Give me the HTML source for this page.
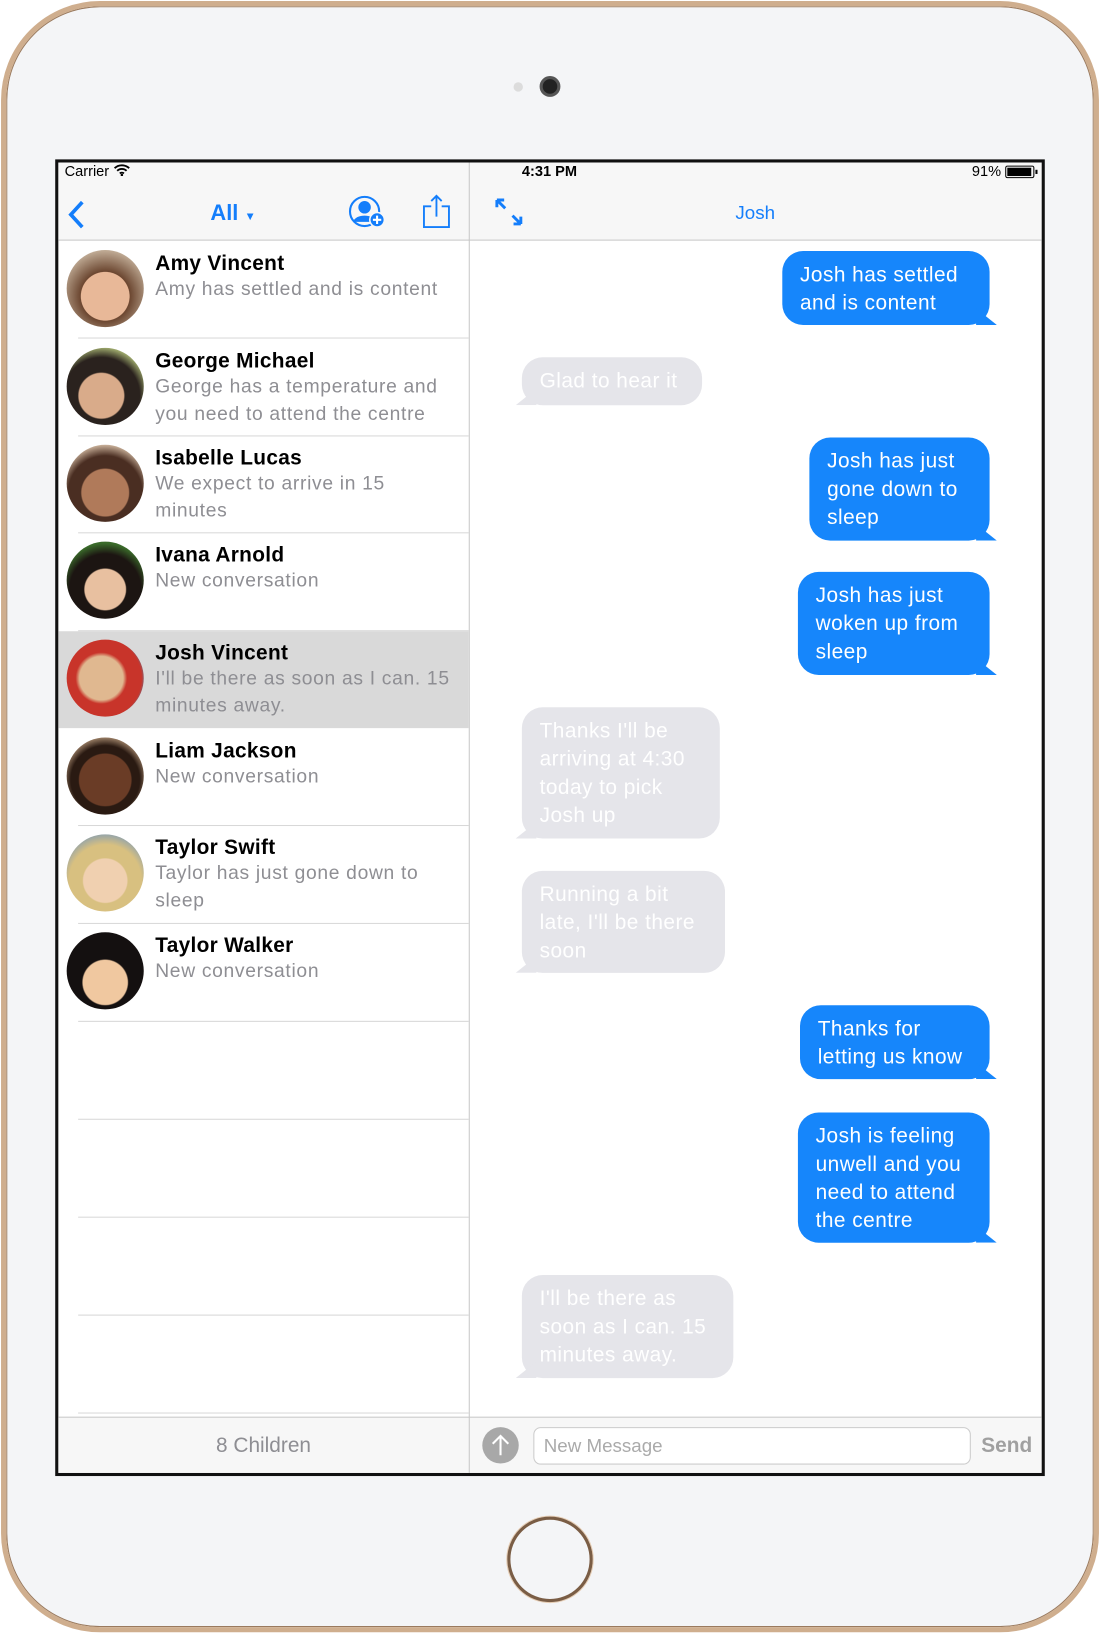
<!DOCTYPE html>
<html><head><meta charset="utf-8"><style>
*{margin:0;padding:0;box-sizing:border-box}
html,body{width:1100px;height:1633px;overflow:hidden;background:#fff}
#w{position:absolute;left:0;top:0;width:1056px;height:1568px;transform:scale(1.041667);transform-origin:0 0;font-family:"Liberation Sans",sans-serif}
.dev{position:absolute;left:1px;top:1px;width:1054px;height:1566px;border-radius:95px;border:5px solid #cfae8e;background:#f4f5f7;box-shadow:inset 0 0 0 1px #9a7a5e}
.scr{position:absolute;left:53px;top:153px;width:950px;height:1264px;border:3px solid #111;background:#fff;overflow:hidden}
.a{position:absolute}
.nav{position:absolute;left:0;top:0;width:944px;height:75px;background:#f7f7f7;border-bottom:1px solid #c8c8c8}
.st{font-size:14px;color:#000;position:absolute;top:0px}
.blue{color:#147efb}
.row{position:absolute;left:0;width:394px;height:94px}
.av{position:absolute;left:8px;top:8px;width:74px;height:74px;border-radius:50%}
.nm{position:absolute;left:93px;top:10px;font-size:20px;font-weight:bold;color:#000;white-space:nowrap;letter-spacing:0.3px}
.sb{position:absolute;left:93px;top:32px;font-size:18.5px;line-height:26px;color:#8e8e93;width:292px;letter-spacing:0.65px}
.sep{position:absolute;left:19px;width:375px;height:1px;background:#d8d8d8}
.b{position:absolute;border-radius:20px;font-size:20px;line-height:27px;color:#fff;padding:10px 17px 8px;letter-spacing:0.45px}
.bl{background:#1686fb}
.gr{background:#e5e5ea}
.bl:after{content:"";position:absolute;right:-7px;bottom:0;width:20px;height:16px;background:#1686fb;clip-path:polygon(0 0,100% 100%,0 100%)}
.gr:after{content:"";position:absolute;left:-6px;bottom:0;width:20px;height:16px;background:#e5e5ea;clip-path:polygon(100% 0,100% 100%,0 100%)}
</style></head><body><div id="w">
<div class="dev"></div>
<div class="a" style="left:493px;top:79px;width:9px;height:9px;border-radius:50%;background:#dcdcdc"></div>
<div class="a" style="left:518px;top:73px;width:20px;height:20px;border-radius:50%;background:#222;border:3px solid #555"></div>
<div class="a" style="left:487px;top:1456px;width:82px;height:82px;border-radius:50%;border:3px solid #7a5d45;box-shadow:0 0 0 1px #e6cdb4"></div>
<div class="scr">
 <div class="nav"></div>
 <div class="a" style="left:394px;top:0;width:1px;height:1264px;background:#c8c8c8"></div>
 <div class="st" style="left:6px">Carrier <svg width="16" height="12" viewBox="0 0 16 12" style="vertical-align:0"><path d="M1 4.5a10 10 0 0 1 14 0M3.5 7a6.5 6.5 0 0 1 9 0M6 9.5a3 3 0 0 1 4 0" stroke="#000" stroke-width="1.8" fill="none"/><circle cx="8" cy="11" r="1.2"/></svg></div>
 <div class="st" style="left:445px;font-weight:bold">4:31 PM</div>
 <div class="st" style="left:877px">91%</div>
 <div class="a" style="left:909px;top:3px;width:28px;height:12px;border:1px solid #000;border-radius:2px;padding:1px"><div style="width:23px;height:8px;background:#000"></div></div>
 <div class="a" style="left:938px;top:7px;width:2px;height:4px;background:#000"></div>
 <svg class="a" style="left:8px;top:36px" width="20" height="28"><path d="M15 2L4 14l11 12" stroke="#147efb" stroke-width="3.5" fill="none"/></svg>
 <div class="a blue" style="left:146px;top:37px;font-size:21px;font-weight:bold">All <span style="font-size:11px">▼</span></div>
 <svg class="a" style="left:278px;top:31px" width="38" height="34" viewBox="0 0 38 34"><circle cx="16" cy="16" r="14" fill="none" stroke="#147efb" stroke-width="2"/><circle cx="16" cy="12" r="6" fill="#147efb"/><path d="M5 26c2-8 20-8 22 0z" fill="#147efb"/><circle cx="28" cy="24" r="7" fill="#147efb" stroke="#f7f7f7" stroke-width="1.5"/><path d="M28 20v8M24 24h8" stroke="#fff" stroke-width="2"/></svg>
 <svg class="a" style="left:349px;top:30px" width="28" height="34"><path d="M9 12H2v20h24V12h-7M14 22V2M9 7l5-5 5 5" stroke="#147efb" stroke-width="1.8" fill="none"/></svg>
 <svg class="a" style="left:418px;top:33px" width="30" height="30"><path d="M3 3l8 8M3 3v7M3 3h7M26 26l-8-8M26 26v-7M26 26h-7" stroke="#147efb" stroke-width="2.8" fill="none"/></svg>
 <div class="a blue" style="left:650px;top:38px;font-size:18px">Josh</div>

 <div class="row" style="top:76px"><div class="av" style="background:radial-gradient(circle at 50% 60%,#e8b898 0 40%,#6b4630 41%,#c9b6a0 80%)"></div><div class="nm">Amy Vincent</div><div class="sb">Amy has settled and is content</div></div>
 <div class="sep" style="top:168px"></div>
 <div class="row" style="top:170px"><div class="av" style="background:radial-gradient(circle at 45% 62%,#d9ab8a 0 35%,#2a221e 37% 60%,#9aa56a 75%)"></div><div class="nm">George Michael</div><div class="sb">George has a temperature and you need to attend the centre</div></div>
 <div class="sep" style="top:262px"></div>
 <div class="row" style="top:263px"><div class="av" style="background:radial-gradient(circle at 50% 62%,#b07a5a 0 38%,#4a2e22 40% 60%,#d8c0a8 80%)"></div><div class="nm">Isabelle Lucas</div><div class="sb">We expect to arrive in 15 minutes</div></div>
 <div class="sep" style="top:355px"></div>
 <div class="row" style="top:356px"><div class="av" style="background:radial-gradient(circle at 50% 62%,#e8c0a0 0 33%,#1c1512 35% 58%,#3a6a2a 75%)"></div><div class="nm">Ivana Arnold</div><div class="sb">New conversation</div></div>
 <div class="sep" style="top:449px"></div>
 <div class="row" style="top:450px;background:#d9d9d9;height:93px"><div class="av" style="background:radial-gradient(circle at 45% 50%,#e0b890 0 38%,#c8342a 45% 70%,#4a88b0 80%)"></div><div class="nm">Josh Vincent</div><div class="sb">I'll be there as soon as I can. 15 minutes away.</div></div>
 <div class="row" style="top:544px"><div class="av" style="background:radial-gradient(circle at 50% 55%,#6a3c26 0 45%,#2a1a12 47% 60%,#c8a888 80%)"></div><div class="nm">Liam Jackson</div><div class="sb">New conversation</div></div>
 <div class="sep" style="top:636px"></div>
 <div class="row" style="top:637px"><div class="av" style="background:radial-gradient(circle at 50% 60%,#f0d0b0 0 36%,#d8c080 38% 60%,#8aa0b0 80%)"></div><div class="nm">Taylor Swift</div><div class="sb">Taylor has just gone down to sleep</div></div>
 <div class="sep" style="top:730px"></div>
 <div class="row" style="top:731px"><div class="av" style="background:radial-gradient(circle at 50% 65%,#f0c8a0 0 35%,#141010 37% 100%)"></div><div class="nm">Taylor Walker</div><div class="sb">New conversation</div></div>
 <div class="sep" style="top:824px"></div>
 <div class="sep" style="top:918px"></div>
 <div class="sep" style="top:1012px"></div>
 <div class="sep" style="top:1106px"></div>
 <div class="sep" style="top:1200px"></div>

 <div class="a" style="left:0;top:1204px;width:944px;height:57px;background:#f7f7f7;border-top:1px solid #c8c8c8"></div>
 <div class="a" style="left:394px;top:1204px;width:1px;height:57px;background:#c8c8c8"></div>
 <div class="a" style="left:0;top:1221px;width:394px;text-align:center;font-size:20px;color:#8e8e93">8 Children</div>
 <div class="a" style="left:407px;top:1214px;width:35px;height:35px;border-radius:50%;background:#a8a8a8"><svg width="35" height="35"><path d="M17.5 27V9M10 16l7.5-7.5L25 16" stroke="#fff" stroke-width="2" fill="none"/></svg></div>
 <div class="a" style="left:456px;top:1214px;width:420px;height:36px;border:1px solid #ccc;border-radius:7px;background:#fff;font-size:18px;color:#aaa;padding:7px 9px">New Message</div>
 <div class="a" style="left:886px;top:1221px;font-size:20px;color:#a0a0a0;font-weight:bold">Send</div>

 <div class="b bl" style="left:695px;top:85px;width:199px;height:71px">Josh has settled and is content</div>
 <div class="b gr" style="left:445px;top:187px;width:173px;height:46px">Glad to hear it</div>
 <div class="b bl" style="left:721px;top:264px;width:173px;height:99px">Josh has just gone down to sleep</div>
 <div class="b bl" style="left:710px;top:393px;width:184px;height:99px">Josh has just woken up from sleep</div>
 <div class="b gr" style="left:445px;top:523px;width:190px;height:126px">Thanks I'll be arriving at 4:30 today to pick Josh up</div>
 <div class="b gr" style="left:445px;top:680px;width:195px;height:98px">Running a bit late, I'll be there soon</div>
 <div class="b bl" style="left:712px;top:809px;width:182px;height:71px">Thanks for letting us know</div>
 <div class="b bl" style="left:710px;top:912px;width:184px;height:125px">Josh is feeling unwell and you need to attend the centre</div>
 <div class="b gr" style="left:445px;top:1068px;width:203px;height:99px">I'll be there as soon as I can. 15 minutes away.</div>
</div>
</div></body></html>
